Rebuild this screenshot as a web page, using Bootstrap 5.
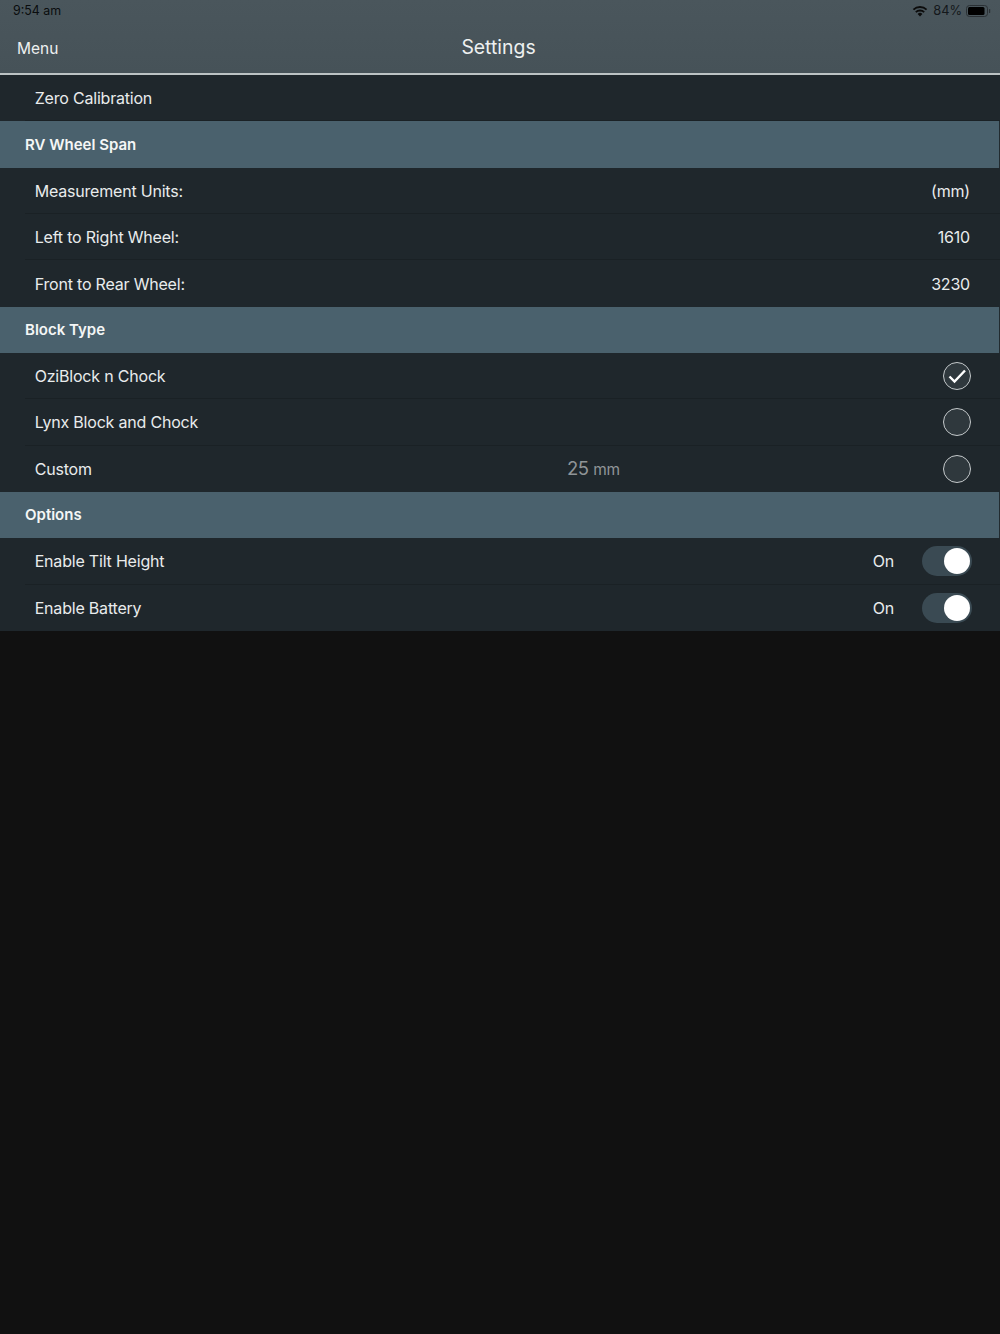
<!DOCTYPE html>
<html lang="en">
<head>
<meta charset="utf-8">
<title>Settings</title>
<link href="https://cdn.jsdelivr.net/npm/bootstrap@5.3.0/dist/css/bootstrap.min.css" rel="stylesheet">
<style>
html,body{height:100%}
body{background:#111111;font-family:Inter,"Liberation Sans",sans-serif;color:#e9ecec;overflow:hidden}
.topbar{height:75px;background:linear-gradient(#4a565c,#465258);border-bottom:2px solid #bcc3c4;position:relative}
.status{height:22px;padding:0 9px 0 13px;color:#0a0d0e;font-size:12.4px;line-height:22px}
.status .pct{font-size:12.8px;color:#14181b}
.menu-l{font-size:15.5px;color:#eef0f0;padding-top:8px}
.titlebar{height:50px;padding:0 0 4px 17px;position:relative}
.title-t{position:absolute;left:0;right:3px;top:0;height:47px;line-height:50px;text-align:center;font-size:19.4px;color:#eef0f0}
.rowx{height:46.33px;background:#1f272c;padding-left:25px;font-size:16px;letter-spacing:-.2px}
.rowx .inner{height:100%;padding:1px 30px 0 9.7px;border-bottom:1px solid #1a2125}
.rowx.last .inner{border-bottom:0}
.sect{height:46.33px;background:#4a616d;padding:1px 0 0 25px;font-size:15px;font-weight:600;color:#f4f6f6;border-right:1px solid #222b30}
.dim{color:#8f9497;font-size:18.5px;position:absolute;left:567px;letter-spacing:-.5px}
.dim span{font-size:15.5px;letter-spacing:-.2px}
.rel{position:relative}
.radio{width:28px;height:28px;border:1.5px solid #c4c9cb;border-radius:50%;background:#2f383d;margin-right:-1px;margin-top:-1px;display:flex;align-items:center;justify-content:center}
.tog{width:50px;height:30px;border-radius:15px;background:#3a4a53;position:relative;margin-left:28px;margin-right:-2px;margin-top:-1px}
.tog::after{content:"";position:absolute;right:2px;top:2px;width:26px;height:26px;border-radius:50%;background:#fff}
.wifi-i{margin-right:1px}
</style>
</head>
<body>
<div class="topbar">
  <div class="status d-flex justify-content-between align-items-center">
    <span>9:54 am</span>
    <span class="d-flex align-items-center">
      <svg class="wifi-i" width="16" height="11" viewBox="0 0 16 11"><path d="M8 10.5 5.6 7.9a3.4 3.4 0 0 1 4.8 0z" fill="#0c0c0c"/><path d="M3.8 6.2a6 6 0 0 1 8.4 0M1.4 3.7a9.4 9.4 0 0 1 13.2 0" stroke="#0c0c0c" stroke-width="1.8" fill="none"/></svg>
      <span class="pct ms-1 me-1">84%</span>
      <svg width="25" height="12" viewBox="0 0 25 12"><rect x=".5" y=".5" width="21" height="11" rx="3" fill="none" stroke="#2b3135"/><rect x="2" y="2" width="16.5" height="8" rx="1.5" fill="#000"/><rect x="23" y="4" width="1.2" height="4" rx=".6" fill="#2b3135"/></svg>
    </span>
  </div>
  <div class="titlebar d-flex align-items-center">
    <span class="menu-l">Menu</span>
    <div class="title-t">Settings</div>
  </div>
</div>
<div class="rowx"><div class="inner d-flex align-items-center"><span>Zero Calibration</span></div></div>
<div class="sect d-flex align-items-center">RV Wheel Span</div>
<div class="rowx"><div class="inner d-flex align-items-center justify-content-between"><span>Measurement Units:</span><span>(mm)</span></div></div>
<div class="rowx"><div class="inner d-flex align-items-center justify-content-between"><span>Left to Right Wheel:</span><span>1610</span></div></div>
<div class="rowx last"><div class="inner d-flex align-items-center justify-content-between"><span>Front to Rear Wheel:</span><span>3230</span></div></div>
<div class="sect d-flex align-items-center">Block Type</div>
<div class="rowx"><div class="inner d-flex align-items-center justify-content-between"><span>OziBlock n Chock</span>
  <span class="radio"><svg width="20" height="16" viewBox="0 0 20 16"><path d="M2.5 8.5 7.5 13.5 18 2.5" fill="none" stroke="#fff" stroke-width="2.4"/></svg></span></div></div>
<div class="rowx"><div class="inner d-flex align-items-center justify-content-between"><span>Lynx Block and Chock</span><span class="radio"></span></div></div>
<div class="rowx last rel"><div class="inner d-flex align-items-center justify-content-between"><span>Custom</span><span class="dim">25 <span>mm</span></span><span class="radio"></span></div></div>
<div class="sect d-flex align-items-center">Options</div>
<div class="rowx"><div class="inner d-flex align-items-center"><span class="me-auto">Enable Tilt Height</span><span>On</span><span class="tog"></span></div></div>
<div class="rowx last"><div class="inner d-flex align-items-center"><span class="me-auto">Enable Battery</span><span>On</span><span class="tog"></span></div></div>
</body>
</html>
